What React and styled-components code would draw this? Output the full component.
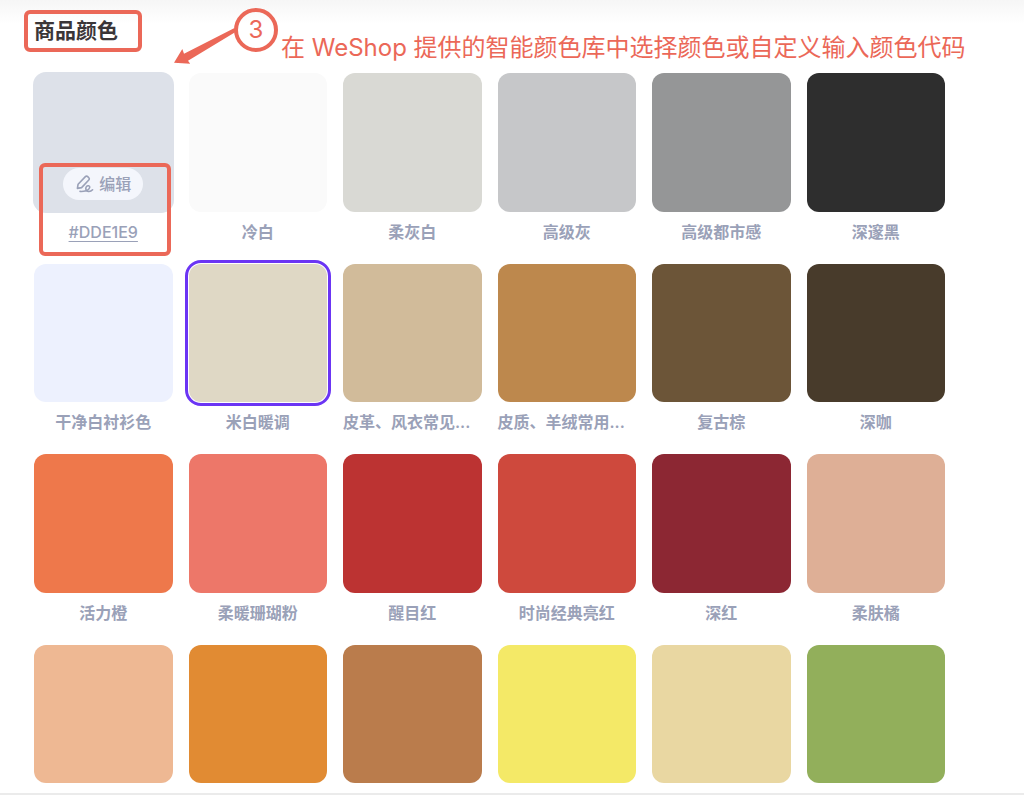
import React, {useState} from 'react';
import styled, {createGlobalStyle} from 'styled-components';

const GlobalStyle = createGlobalStyle`
  * {
    box-sizing: border-box;
  }

  body {
    margin: 0;
    background: #ffffff;
    font-family: Inter, 'Noto Sans CJK SC', sans-serif;
  }

  button {
    border: 0;
    font-family: inherit;
    cursor: pointer;
  }
`;

const markRed = '#eb6858';

const Page = styled.main`
  padding: 8px 79px 10px 34px;
  border-bottom: 2px solid #ebebeb;
  background: linear-gradient(#f6f6f6, #ffffff 24px);
`;

const Header = styled.header`
  display: flex;
  align-items: flex-start;
  height: 65px;
  margin-left: -10px;
`;

const Title = styled.h1`
  margin: 2px 30px 0 0;
  padding: 0 20px 0 6px;
  border: 4px solid ${markRed};
  border-radius: 6px;
  color: #3b3638;
  font-size: 21px;
  font-weight: 700;
  line-height: 34px;
  white-space: nowrap;
`;

const Arrow = styled.svg`
  flex: none;
  margin-top: 16px;
  overflow: visible;
  fill: ${markRed};
`;

const StepBadge = styled.div`
  flex: none;
  width: 44px;
  height: 44px;
  border: 4px solid ${markRed};
  border-radius: 50%;
  color: ${markRed};
  font-size: 24px;
  line-height: 36px;
  text-align: center;
`;

const StepText = styled.p`
  margin: 23px 0 0 3px;
  color: ${markRed};
  font-size: 24px;
  line-height: 34px;
  white-space: nowrap;
`;

const ColorGrid = styled.ul`
  display: grid;
  grid-template-columns: repeat(6, minmax(0, 1fr));
  gap: 20px 16px;
  margin: 0;
  padding: 0;
  list-style: none;
`;

const Item = styled.li`
  position: relative;
`;

const Swatch = styled.button`
  display: block;
  width: 100%;
  padding: 0;
  aspect-ratio: 1;
  border-radius: 12px;
  background: ${props => props.$color};
  box-shadow: ${props => (props.$raised ? `0 0 0 1px ${props.$color}` : 'none')};
  outline: ${props => (props.$selected ? '3px solid #6b35f4' : 'none')};
  outline-offset: 1px;
`;

const Name = styled.div`
  margin-top: 8px;
  color: #9aa1b8;
  font-size: 16px;
  font-weight: 600;
  line-height: 24px;
  text-align: ${props => (props.$clipped ? 'left' : 'center')};
  white-space: nowrap;
`;

const CodeLink = styled.a`
  color: inherit;
  font-weight: 500;
  text-decoration: underline;
  text-underline-offset: 3px;
`;

const EditRow = styled.div`
  position: absolute;
  right: 0;
  bottom: 44px;
  left: 0;
  display: flex;
  justify-content: center;
`;

const EditButton = styled.button`
  display: flex;
  align-items: center;
  gap: 4px;
  height: 32px;
  padding: 0 12px;
  border-radius: 16px;
  background: #f4f6fc;
  color: #9aa1b8;
  font-size: 16px;
  font-weight: 500;
  line-height: 24px;
`;

const EditFrame = styled.div`
  position: absolute;
  right: 2px;
  bottom: -12px;
  left: 5px;
  height: 93px;
  border: 4px solid ${markRed};
  border-radius: 6px;
  pointer-events: none;
`;

const colors = [
  {name: '#DDE1E9', value: '#dde1e9', custom: true},
  {name: '冷白', value: '#fafafa'},
  {name: '柔灰白', value: '#d9d9d4'},
  {name: '高级灰', value: '#c6c7c9'},
  {name: '高级都市感', value: '#959697'},
  {name: '深邃黑', value: '#2e2e2e'},
  {name: '干净白衬衫色', value: '#edf1fe'},
  {name: '米白暖调', value: '#dfd8c5'},
  {name: '皮革、风衣常见...', value: '#d1bb9a', clipped: true},
  {name: '皮质、羊绒常用...', value: '#bd884d', clipped: true},
  {name: '复古棕', value: '#6c5538'},
  {name: '深咖', value: '#483b2b'},
  {name: '活力橙', value: '#ee784b'},
  {name: '柔暖珊瑚粉', value: '#ed7769'},
  {name: '醒目红', value: '#bc3332'},
  {name: '时尚经典亮红', value: '#ce493d'},
  {name: '深红', value: '#8c2733'},
  {name: '柔肤橘', value: '#deaf96'},
  {value: '#eeb893'},
  {value: '#e18b33'},
  {value: '#ba7c4c'},
  {value: '#f4e967'},
  {value: '#e9d7a2'},
  {value: '#92af5b'},
];

const PenIcon = () => (
  <svg width="20" height="20" viewBox="0 0 20 20" fill="none" stroke="currentColor" strokeWidth="1.6" strokeLinecap="round" strokeLinejoin="round" aria-hidden="true">
    <path d="M2.4 14.4l.7-4.2 7.3-7.6a1.600 1.600 0 0 1 2.300 0l1.100 1.100a1.600 1.600 0 0 1 0 2.300L6.600 13.600z" />
    <path d="M5 17.400c4 .3 9-1 9.700-3.800.4-2-2.200-2.500-3.300-1-1.300 1.800-.5 4.600 2 4.900 1.700.2 3.200-.6 4.200-1.700" />
  </svg>
);

function App() {
  const [selected, setSelected] = useState('#dfd8c5');

  return (
    <>
      <GlobalStyle />
      <Page>
        <Header>
          <Title>商品颜色</Title>
          <Arrow width="62" height="44" viewBox="0 0 62 44" aria-hidden="true">
            <path d="M2 38.700L10.300 25l1.700 4.700L62.500 4l1 4L16 36.700l2.200 3z" />
          </Arrow>
          <StepBadge>3</StepBadge>
          <StepText>在 WeShop 提供的智能颜色库中选择颜色或自定义输入颜色代码</StepText>
        </Header>
        <ColorGrid>
          {colors.map(color => (
            <Item key={color.value}>
              <Swatch
                type="button"
                aria-label={color.name || color.value}
                aria-pressed={selected === color.value}
                onClick={() => setSelected(color.value)}
                $color={color.value}
                $raised={color.custom}
                $selected={selected === color.value}
              />
              {color.name && (
                <Name $clipped={color.clipped}>
                  {color.custom ? <CodeLink href="#code">{color.name}</CodeLink> : color.name}
                </Name>
              )}
              {color.custom && (
                <>
                  <EditRow>
                    <EditButton type="button">
                      <PenIcon />
                      编辑
                    </EditButton>
                  </EditRow>
                  <EditFrame />
                </>
              )}
            </Item>
          ))}
        </ColorGrid>
      </Page>
    </>
  );
}

export default App;
